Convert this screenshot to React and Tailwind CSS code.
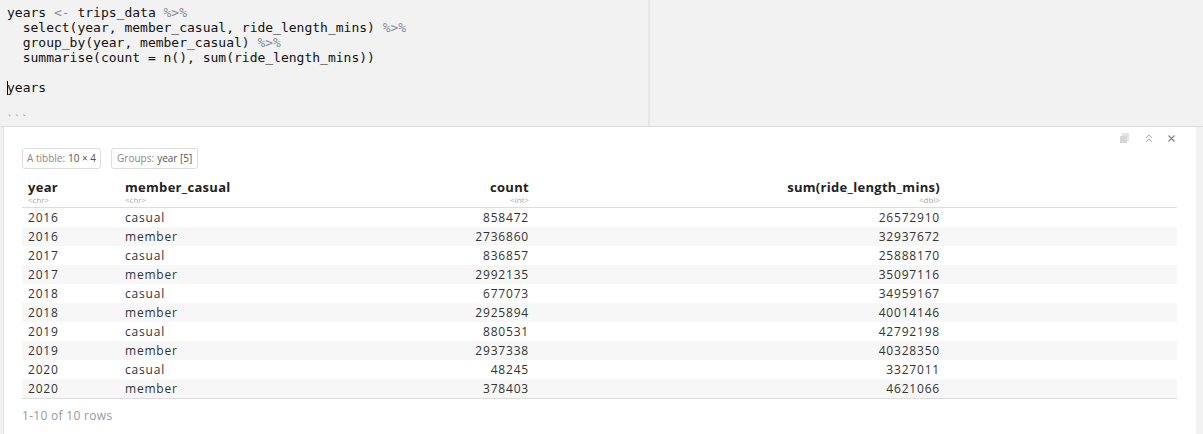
const rows = [
	["2016", "casual", "858472", "26572910"],
	["2016", "member", "2736860", "32937672"],
	["2017", "casual", "836857", "25888170"],
	["2017", "member", "2992135", "35097116"],
	["2018", "casual", "677073", "34959167"],
	["2018", "member", "2925894", "40014146"],
	["2019", "casual", "880531", "42792198"],
	["2019", "member", "2937338", "40328350"],
	["2020", "casual", "48245", "3327011"],
	["2020", "member", "378403", "4621066"],
];

const cols = "grid grid-cols-[97px_200px_216px_411px_1fr]";

const Op = ({ children }) => <span className="text-[#8a8f99]">{children}</span>;

const Head = ({ name, type, right }) => (
	<div className={right ? "pr-[6px] text-right" : "pl-[6px]"}>
		<div className="font-bold text-[13px] leading-[14px] text-[#222] tracking-[0.3px]">{name}</div>
		<div className="text-[8px] leading-[9px] mt-[1px] text-[#aaa]">{type}</div>
	</div>
);

const App = () => {
	return (
		<div className="w-[1203px] h-[434px] bg-[#f2f2f2] overflow-hidden flex flex-col">
			{/* code chunk */}
			<div className="flex h-[127px] border-b border-[#dcdcdc]">
				<div className="w-[650px] border-r-2 border-[#e6e6e6] pl-[7px] pt-[5px] font-['DejaVu_Sans_Mono',monospace] text-[13px] leading-[15px] text-[#111] whitespace-pre">
					<div>
						years <Op>&lt;-</Op> trips_data <Op>%&gt;%</Op>
					</div>
					<div>
						{"  "}select(year, member_casual, ride_length_mins) <Op>%&gt;%</Op>
					</div>
					<div>
						{"  "}group_by(year, member_casual) <Op>%&gt;%</Op>
					</div>
					<div>{"  "}summarise(count = n(), sum(ride_length_mins))</div>
					<div>&nbsp;</div>
					<div className="flex items-center">
						<span className="w-px h-[14px] bg-black -mr-px" />
						years
					</div>
					<div>&nbsp;</div>
					<div className="text-[9px] text-[#6a7a9a] leading-[12px] tracking-[2px] pt-[3px]">```</div>
				</div>
				<div className="flex-1" />
			</div>

			{/* output panel */}
			<div className="flex-1 flex">
				<div className="ml-[3px] w-[1193px] bg-white border-l border-[#e3e3e3] relative font-['Open_Sans',sans-serif]">
					<div className="absolute top-[5px] right-[20px] flex items-center gap-[13px]">
						<svg width="12" height="12" viewBox="0 0 12 12">
							<rect x="3" y="1" width="7" height="8" fill="#e4e4e4" />
							<rect x="1" y="4" width="7" height="7" fill="#d6d6d6" />
						</svg>
						<svg width="10" height="10" viewBox="0 0 10 10" fill="none" stroke="#a8a8a8" strokeWidth="1">
							<path d="M2 5 L5 2 L8 5 M2 9 L5 6 L8 9" />
						</svg>
						<svg width="9" height="9" viewBox="0 0 9 9" fill="none" stroke="#888" strokeWidth="1.3">
							<path d="M1.5 1.5 L7.5 7.5 M7.5 1.5 L1.5 7.5" />
						</svg>
					</div>

					<div className="pl-[18px] pt-[21px]">
						<div className="flex gap-[10px] text-[10px]">
							<span className="border border-[#dddddd] rounded-[3px] px-[4px] h-[21px] flex items-center text-[#888]">
								A tibble: <span className="text-[#555] ml-[3px]">10 × 4</span>
							</span>
							<span className="border border-[#dddddd] rounded-[3px] px-[5px] h-[21px] flex items-center text-[#888]">
								Groups: <span className="text-[#555] ml-[3px]">year [5]</span>
							</span>
						</div>

						<div className="w-[1155px] mt-[8px] text-[12px] text-[#333]">
							<div className={`${cols} border-b border-[#dddddd] h-[31px] pt-[3px]`}>
								<Head name="year" type="<chr>" />
								<Head name="member_casual" type="<chr>" />
								<Head name="count" type="<int>" right />
								<Head name="sum(ride_length_mins)" type="<dbl>" right />
								<div />
							</div>
							{rows.map((r, i) => (
								<div
									key={i}
									className={`${cols} h-[19px] items-center tracking-[0.8px] ${
										i % 2 === 1 ? "bg-[#f7f7f7]" : "bg-white"
									}`}
								>
									<div className="pl-[6px]">{r[0]}</div>
									<div className="pl-[6px]">{r[1]}</div>
									<div className="pr-[6px] text-right">{r[2]}</div>
									<div className="pr-[6px] text-right">{r[3]}</div>
									<div />
								</div>
							))}
							<div className="border-t border-[#dddddd]" />
						</div>

						<div className="mt-[8px] text-[12px] text-[#999] tracking-[0.3px]">1-10 of 10 rows</div>
					</div>
				</div>
				<div className="flex-1" />
			</div>
		</div>
	);
};

export default App;
